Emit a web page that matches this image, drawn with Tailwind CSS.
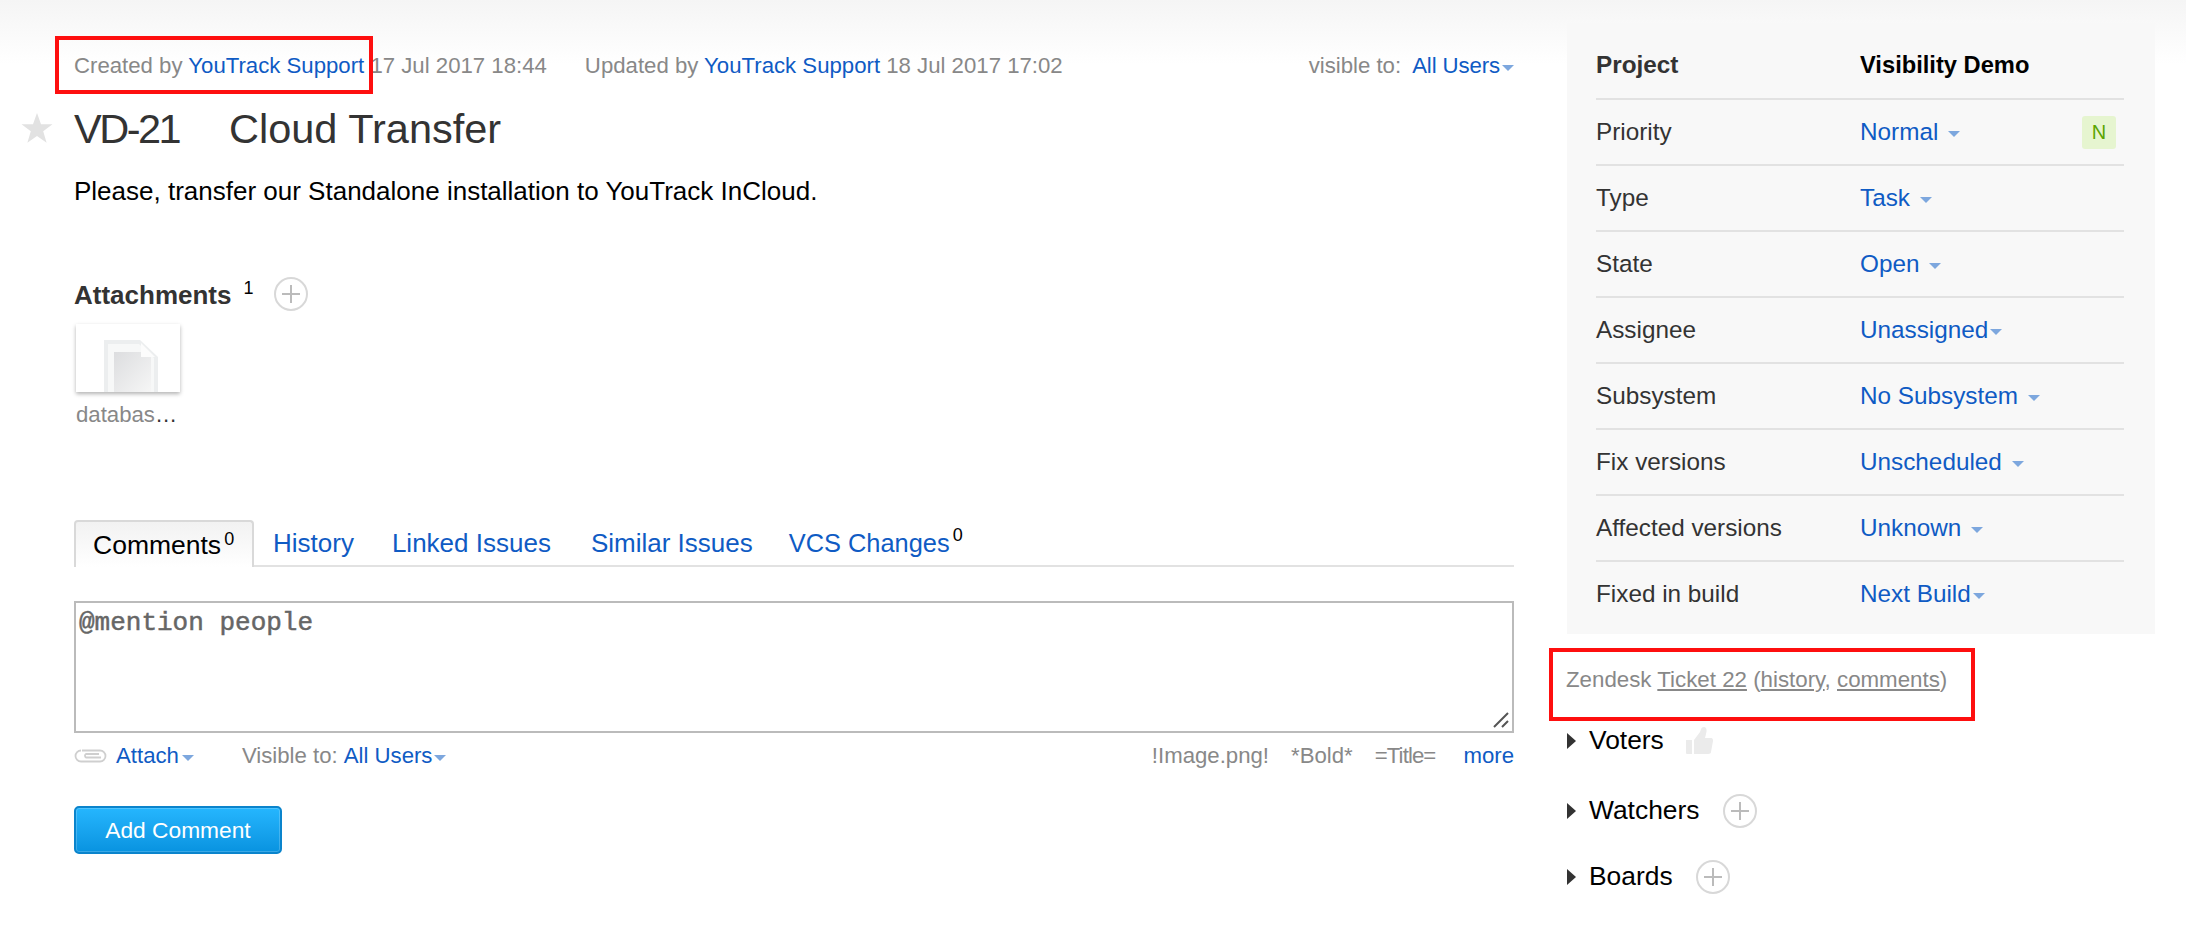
<!DOCTYPE html>
<html lang="en">
<head>
  <meta charset="UTF-8" />
  <title>VD-21 Cloud Transfer</title>
  <script src="https://cdn.jsdelivr.net/npm/@tailwindcss/browser@4"></script>
</head>
<body class="relative h-[930px] w-[2186px] overflow-hidden bg-white font-['Liberation_Sans',Arial,sans-serif] text-[#333]">

  <!-- top fade -->
  <div class="absolute inset-x-0 top-0 h-[64px] bg-gradient-to-b from-[#f5f5f5] to-white"></div>

  <div class="relative flex">

    <!-- Issue column -->
    <div class="ml-[74px] w-[1440px] shrink-0">

      <div class="mt-[53px] flex h-[26px] items-center text-[22.2px] leading-[26px] text-[#888]">
        <span>Created by <a class="text-[#0f5bc4]">YouTrack Support</a> 17 Jul 2017 18:44</span>
        <span class="ml-[38px]">Updated by <a class="text-[#0f5bc4]">YouTrack Support</a> 18 Jul 2017 17:02</span>
        <span class="ml-auto">visible to:</span>
        <a class="ml-[11px] text-[#0f5bc4] tracking-[-0.1px]">All Users</a>
        <span class="ml-[2px] mt-[3px] h-0 w-0 border-x-[6px] border-t-[6px] border-x-transparent border-t-[#7da7de]"></span>
      </div>

      <div class="relative mt-[25px] flex h-[50px] items-center text-[41.5px] leading-[50px] text-[#333]">
        <svg class="absolute left-[-53px] top-[8px]" width="32" height="32" viewBox="0 0 32 32"><path fill="#e2e2e2" d="M16 1l4 11.3h11.5l-9.3 7 3.4 11.4L16 24l-9.6 6.7 3.4-11.4-9.3-7H12z"/></svg>
        <span class="w-[155px] tracking-[-2.5px]">VD-21</span>
        <span>Cloud Transfer</span>
      </div>

      <p class="mt-[21px] text-[26px] leading-[32px] text-black">Please, transfer our Standalone installation to YouTrack InCloud.</p>

      <div class="mt-[70px] flex h-[36px] items-center">
        <span class="text-[26px] font-bold leading-[36px] text-[#333]">Attachments</span>
        <span class="ml-[12px] mb-[14px] text-[18px] leading-[20px] text-black">1</span>
        <svg class="ml-[20px] mb-[2px]" width="34" height="34" viewBox="0 0 34 34"><circle cx="17" cy="17" r="16" fill="#fff" stroke="#d8d8d8" stroke-width="2"/><path d="M17 8v18M8 17h18" stroke="#bbb" stroke-width="2"/></svg>
      </div>

      <div class="ml-[2px] mt-[11px] flex h-[68px] w-[104px] justify-center bg-white pl-[6px] shadow-[0_2px_4px_rgba(0,0,0,0.3)]">
        <svg class="mt-[16px]" width="54" height="52" viewBox="0 0 54 52">
          <defs><linearGradient id="page" x1="0" y1="0" x2="1" y2="1"><stop offset="0" stop-color="#dcdddf"/><stop offset="1" stop-color="#f6f6f6"/></linearGradient></defs>
          <path fill="#eceeef" d="M0 0h36l18 17v35H0z"/>
          <path fill="#f7f8f8" d="M4 4h31l15 14v34H4z"/>
          <path fill="url(#page)" d="M10 12h27v5h10v35H10z"/>
          <path fill="#fcfcfc" d="M37 3l14 14H37z"/>
        </svg>
      </div>
      <div class="ml-[2px] mt-[10px] text-[22.2px] leading-[26px] text-[#888]">databas<span class="text-[#333]">…</span></div>

      <!-- Tabs -->
      <div class="mt-[92px] flex h-[47px] items-end border-b-2 border-[#e2e2e2] text-[26px] leading-[44px]">
        <div class="relative top-[2px] flex h-[47px] w-[180px] items-center rounded-t-[4px] border-x-2 border-t-2 border-[#d9d9d9] border-b-0 bg-gradient-to-b from-[#f2f2f2] to-white pl-[17px] text-[26.5px] text-black">Comments<span class="relative top-[-6px] ml-[3px] text-[18px] leading-[20px]">0</span></div>
        <a class="ml-[19px] text-[#0f5bc4]">History</a>
        <a class="ml-[38px] text-[#0f5bc4]">Linked Issues</a>
        <a class="ml-[40px] text-[#0f5bc4]">Similar Issues</a>
        <a class="ml-[36px] text-[25.4px] text-[#0f5bc4]">VCS Changes</a><span class="relative top-[-20px] ml-[3px] text-[18px] leading-[20px] text-black">0</span>
      </div>

      <!-- Comment box -->
      <div class="relative mt-[34px] h-[132px] border-2 border-[#bbb] px-[3px] pt-[4px] font-['Liberation_Mono',monospace] text-[26px] leading-[32px] text-[#666] [-webkit-text-stroke:0.5px_#666]">
        @mention people
        <svg class="absolute bottom-[2px] right-[2px]" width="18" height="18" viewBox="0 0 18 18"><path d="M2 16L16 2M10 16l6-6" stroke="#555" stroke-width="2"/></svg>
      </div>

      <div class="mt-[10px] flex h-[26px] items-center text-[22.2px] leading-[26px] text-[#888]">
        <svg width="34" height="16" viewBox="0 0 34 16" fill="none" stroke="#cfcfcf" stroke-width="1.8"><path d="M8 2.5h18a5.5 5.500 0 0 1 0 11H7a5.500 5.500 0 0 1 0-11M27 9.500H12a2 2 0 0 1 0-3.500h13"/></svg>
        <a class="ml-[8px] text-[#0f5bc4]">Attach</a>
        <span class="ml-[3px] mt-[3px] h-0 w-0 border-x-[6px] border-t-[6px] border-x-transparent border-t-[#7da7de]"></span>
        <span class="ml-[48px]">Visible to:</span>
        <a class="ml-[6px] text-[#0f5bc4]">All Users</a>
        <span class="ml-[2px] mt-[3px] h-0 w-0 border-x-[6px] border-t-[6px] border-x-transparent border-t-[#7da7de]"></span>
        <span class="ml-auto">!Image.png!</span>
        <span class="ml-[22px]">*Bold*</span>
        <span class="ml-[22px] tracking-[-0.9px]">=Title=</span>
        <a class="ml-[28px] text-[#0f5bc4]">more</a>
      </div>

      <button class="mt-[37px] block h-[48px] w-[208px] rounded-[5px] border-2 border-[#0a84cc] bg-gradient-to-b from-[#25b6fe] to-[#0893e0] text-[22.75px] text-white shadow-[inset_0_0_0_1px_rgba(255,255,255,0.2)]">Add Comment</button>
    </div>

    <!-- Sidebar -->
    <div class="ml-[53px] w-[588px] shrink-0">
      <div class="mt-[23px] h-[611px] bg-[#f8f8f8] pl-[29px] pr-[31px] text-[24.3px] text-[#333]">
        <div class="flex h-[77px] items-center border-b-2 border-[#e2e2e2] pt-[10px] font-bold">
          <span class="w-[264px]">Project</span><span class="text-[23.7px] text-black">Visibility Demo</span>
        </div>
        <div class="flex h-[66px] items-center border-b-2 border-[#e2e2e2]">
          <span class="w-[264px]">Priority</span><a class="text-[#0f5bc4]">Normal</a>
          <span class="ml-[10px] mt-[3px] h-0 w-0 border-x-[6px] border-t-[6px] border-x-transparent border-t-[#7da7de]"></span>
          <span class="ml-auto mr-[8px] flex h-[33px] w-[34px] items-center justify-center rounded-[3px] bg-[#e6f5d0] text-[20px] text-[#5aa500]">N</span>
        </div>
        <div class="flex h-[66px] items-center border-b-2 border-[#e2e2e2]">
          <span class="w-[264px]">Type</span><a class="text-[#0f5bc4]">Task</a>
          <span class="ml-[10px] mt-[3px] h-0 w-0 border-x-[6px] border-t-[6px] border-x-transparent border-t-[#7da7de]"></span>
        </div>
        <div class="flex h-[66px] items-center border-b-2 border-[#e2e2e2]">
          <span class="w-[264px]">State</span><a class="text-[#0f5bc4]">Open</a>
          <span class="ml-[10px] mt-[3px] h-0 w-0 border-x-[6px] border-t-[6px] border-x-transparent border-t-[#7da7de]"></span>
        </div>
        <div class="flex h-[66px] items-center border-b-2 border-[#e2e2e2]">
          <span class="w-[264px]">Assignee</span><a class="text-[#0f5bc4]">Unassigned</a>
          <span class="ml-[2px] mt-[3px] h-0 w-0 border-x-[6px] border-t-[6px] border-x-transparent border-t-[#7da7de]"></span>
        </div>
        <div class="flex h-[66px] items-center border-b-2 border-[#e2e2e2]">
          <span class="w-[264px]">Subsystem</span><a class="text-[#0f5bc4]">No Subsystem</a>
          <span class="ml-[10px] mt-[3px] h-0 w-0 border-x-[6px] border-t-[6px] border-x-transparent border-t-[#7da7de]"></span>
        </div>
        <div class="flex h-[66px] items-center border-b-2 border-[#e2e2e2]">
          <span class="w-[264px]">Fix versions</span><a class="text-[#0f5bc4]">Unscheduled</a>
          <span class="ml-[10px] mt-[3px] h-0 w-0 border-x-[6px] border-t-[6px] border-x-transparent border-t-[#7da7de]"></span>
        </div>
        <div class="flex h-[66px] items-center border-b-2 border-[#e2e2e2]">
          <span class="w-[264px]">Affected versions</span><a class="text-[#0f5bc4]">Unknown</a>
          <span class="ml-[10px] mt-[3px] h-0 w-0 border-x-[6px] border-t-[6px] border-x-transparent border-t-[#7da7de]"></span>
        </div>
        <div class="flex h-[64px] items-center">
          <span class="w-[264px]">Fixed in build</span><a class="text-[#0f5bc4]">Next Build</a>
          <span class="ml-[2px] mt-[3px] h-0 w-0 border-x-[6px] border-t-[6px] border-x-transparent border-t-[#7da7de]"></span>
        </div>
      </div>

      <div class="ml-[-1px] mt-[33px] text-[22.3px] leading-[26px] text-[#888]">Zendesk <a class="underline">Ticket 22</a> (<a class="underline">history</a>, <a class="underline">comments</a>)</div>

      <div class="mt-[33px] flex h-[30px] items-center text-[26.4px] text-black">
        <span class="h-0 w-0 border-y-[8px] border-l-[9px] border-y-transparent border-l-[#333]"></span>
        <span class="ml-[13px]">Voters</span>
        <svg class="ml-[22px]" width="27" height="28" viewBox="0 0 27 28"><path fill="#ebebeb" d="M0 13h6v14H1a1 1 0 0 1-1-1zM8 13l6-8c1-2 1-5 4-5s3 4 2 7l-1 4h6c2 0 2 2 2 3l-2 11c0 1-1 2-3 2H8z"/></svg>
      </div>
      <div class="mt-[40px] flex h-[30px] items-center text-[26.4px] text-black">
        <span class="h-0 w-0 border-y-[8px] border-l-[9px] border-y-transparent border-l-[#333]"></span>
        <span class="ml-[13px]">Watchers</span>
        <svg class="ml-[24px]" width="34" height="34" viewBox="0 0 34 34"><circle cx="17" cy="17" r="16" fill="#fff" stroke="#d8d8d8" stroke-width="2"/><path d="M17 8v18M8 17h18" stroke="#bbb" stroke-width="2"/></svg>
      </div>
      <div class="mt-[36px] flex h-[30px] items-center text-[26.4px] text-black">
        <span class="h-0 w-0 border-y-[8px] border-l-[9px] border-y-transparent border-l-[#333]"></span>
        <span class="ml-[13px]">Boards</span>
        <svg class="ml-[23px]" width="34" height="34" viewBox="0 0 34 34"><circle cx="17" cy="17" r="16" fill="#fff" stroke="#d8d8d8" stroke-width="2"/><path d="M17 8v18M8 17h18" stroke="#bbb" stroke-width="2"/></svg>
      </div>
    </div>
  </div>

  <!-- annotation boxes -->
  <div class="absolute left-[55px] top-[36px] h-[58px] w-[318px] border-[4px] border-[#fe0f0f]"></div>
  <div class="absolute left-[1549px] top-[648px] h-[73px] w-[426px] border-[4px] border-[#fe0f0f]"></div>
</body>
</html>
